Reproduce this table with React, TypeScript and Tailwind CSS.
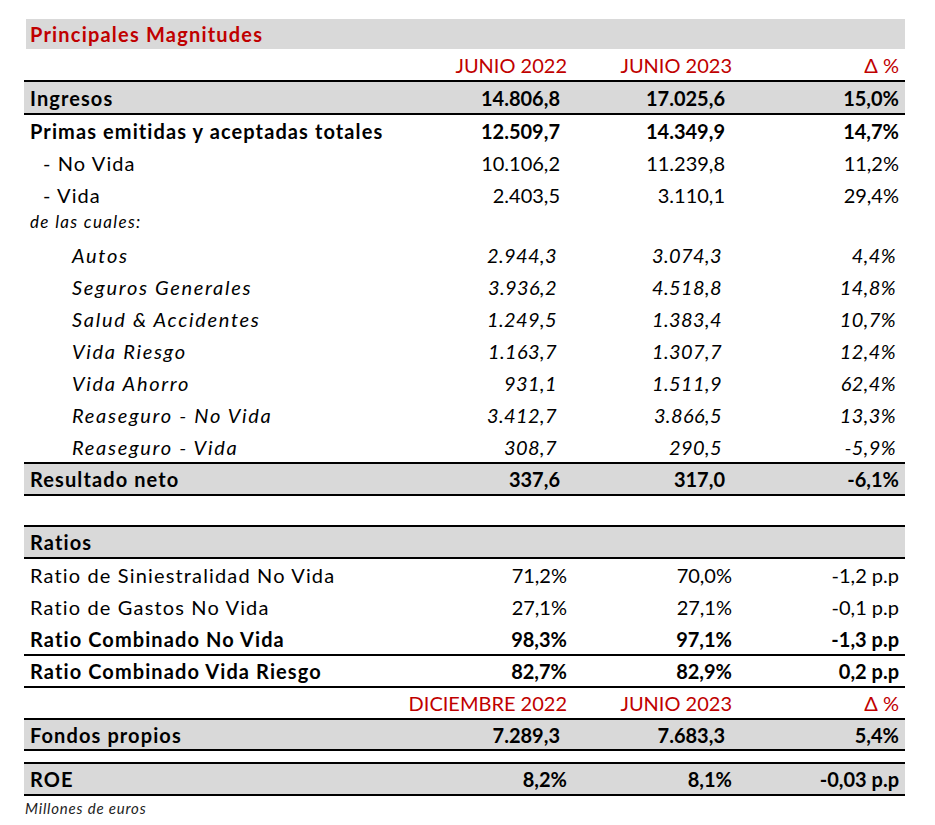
import React from 'react';

type Row = {
  label: string;
  v1: string;
  v2: string;
  v3: string;
  kind?: 'bold' | 'normal' | 'sub' | 'italic';
  grey?: boolean;
  h?: string;
  pct?: boolean;
};

const font = { fontFamily: 'Lato, "Open Sans", sans-serif' };

function Line() {
  return <div className="h-[2px] bg-black" />;
}

function DataRow({ row }: { row: Row }) {
  const kind = row.kind ?? 'normal';
  const weight = kind === 'bold' ? 'font-bold' : 'font-normal';
  const italic = kind === 'italic' ? 'italic' : '';
  const labelPad =
    kind === 'sub'
      ? 'pl-[19px] tracking-[1.1px]'
      : kind === 'italic'
      ? 'pl-[48px] tracking-[1.7px]'
      : kind === 'bold'
      ? 'pl-[6px] tracking-[1.1px]'
      : 'pl-[6px] tracking-[1.15px]';
  let numPad = row.pct ? '' : 'pr-[7px]';
  let lastPad = 'pr-[6px]';
  if (kind === 'italic') {
    numPad = 'pr-[10px] tracking-[0.4px]';
    lastPad = 'pr-[9px] tracking-[0.4px]';
  }
  return (
    <div
      className={`grid grid-cols-[377px_166px_165px_173px] items-center text-[20px] text-black ${row.h ?? 'h-[32px]'} ${
        row.grey ? 'bg-[#d9d9d9]' : ''
      } ${weight} ${italic}`}
    >
      <div className={`${labelPad} whitespace-nowrap`}>{row.label}</div>
      <div className={`text-right ${numPad}`}>{row.v1}</div>
      <div className={`text-right ${numPad}`}>{row.v2}</div>
      <div className={`text-right ${lastPad}`}>{row.v3}</div>
    </div>
  );
}

function HeaderRow({ a, b, h }: { a: string; b: string; h: string }) {
  return (
    <div className={`grid grid-cols-[377px_166px_165px_173px] items-center text-[20px] text-[#c00000] ${h}`}>
      <div />
      <div className="text-right whitespace-nowrap">{a}</div>
      <div className="text-right whitespace-nowrap">{b}</div>
      <div className="text-right pr-[6px]">Δ %</div>
    </div>
  );
}

const italics: Row[] = [
  { label: 'Autos', v1: '2.944,3', v2: '3.074,3', v3: '4,4%', kind: 'italic' },
  { label: 'Seguros Generales', v1: '3.936,2', v2: '4.518,8', v3: '14,8%', kind: 'italic' },
  { label: 'Salud & Accidentes', v1: '1.249,5', v2: '1.383,4', v3: '10,7%', kind: 'italic' },
  { label: 'Vida Riesgo', v1: '1.163,7', v2: '1.307,7', v3: '12,4%', kind: 'italic' },
  { label: 'Vida Ahorro', v1: '931,1', v2: '1.511,9', v3: '62,4%', kind: 'italic' },
  { label: 'Reaseguro - No Vida', v1: '3.412,7', v2: '3.866,5', v3: '13,3%', kind: 'italic' },
  { label: 'Reaseguro - Vida', v1: '308,7', v2: '290,5', v3: '-5,9%', kind: 'italic', h: 'h-[31px]' },
];

export default function App() {
  return (
    <div className="w-[935px] h-[825px] bg-white pt-[19px]" style={font}>
      <div className="ml-[24px] w-[881px]">
        <div className="ml-[2px] h-[30px] bg-[#d9d9d9] flex items-center pl-[4px] text-[20px] font-bold tracking-[1.2px] text-[#c00000]">
          Principales Magnitudes
        </div>
        <HeaderRow a="JUNIO 2022" b="JUNIO 2023" h="h-[31px]" />
        <Line />
        <DataRow row={{ label: 'Ingresos', v1: '14.806,8', v2: '17.025,6', v3: '15,0%', kind: 'bold', grey: true, h: 'h-[31px]' }} />
        <Line />
        <DataRow row={{ label: 'Primas emitidas y aceptadas totales', v1: '12.509,7', v2: '14.349,9', v3: '14,7%', kind: 'bold' }} />
        <DataRow row={{ label: '- No Vida', v1: '10.106,2', v2: '11.239,8', v3: '11,2%', kind: 'sub' }} />
        <DataRow row={{ label: '- Vida', v1: '2.403,5', v2: '3.110,1', v3: '29,4%', kind: 'sub' }} />
        <div className="h-[28px] pl-[6px] text-[17px] italic tracking-[1.35px] text-black leading-[22px]">de las cuales:</div>
        {italics.map((r) => (
          <DataRow key={r.label} row={r} />
        ))}
        <Line />
        <DataRow row={{ label: 'Resultado neto', v1: '337,6', v2: '317,0', v3: '-6,1%', kind: 'bold', grey: true, h: 'h-[30px]' }} />
        <Line />
        <div className="h-[29px]" />
        <Line />
        <DataRow row={{ label: 'Ratios', v1: '', v2: '', v3: '', kind: 'bold', grey: true, h: 'h-[30px]' }} />
        <Line />
        <DataRow row={{ label: 'Ratio de Siniestralidad No Vida', v1: '71,2%', v2: '70,0%', v3: '-1,2 p.p', pct: true }} />
        <DataRow row={{ label: 'Ratio de Gastos No Vida', v1: '27,1%', v2: '27,1%', v3: '-0,1 p.p', pct: true }} />
        <DataRow row={{ label: 'Ratio Combinado No Vida', v1: '98,3%', v2: '97,1%', v3: '-1,3 p.p', kind: 'bold', pct: true, h: 'h-[31px]' }} />
        <Line />
        <DataRow row={{ label: 'Ratio Combinado Vida Riesgo', v1: '82,7%', v2: '82,9%', v3: '0,2 p.p', kind: 'bold', pct: true, h: 'h-[30px]' }} />
        <Line />
        <HeaderRow a="DICIEMBRE 2022" b="JUNIO 2023" h="h-[30px]" />
        <Line />
        <DataRow row={{ label: 'Fondos propios', v1: '7.289,3', v2: '7.683,3', v3: '5,4%', kind: 'bold', grey: true, h: 'h-[29px]' }} />
        <Line />
        <div className="h-[11px]" />
        <Line />
        <DataRow row={{ label: 'ROE', v1: '8,2%', v2: '8,1%', v3: '-0,03 p.p', kind: 'bold', grey: true, pct: true, h: 'h-[30px]' }} />
        <Line />
        <div className="pl-[1px] pt-[1px] text-[15px] italic tracking-[0.8px] text-[#222]">Millones de euros</div>
      </div>
    </div>
  );
}
